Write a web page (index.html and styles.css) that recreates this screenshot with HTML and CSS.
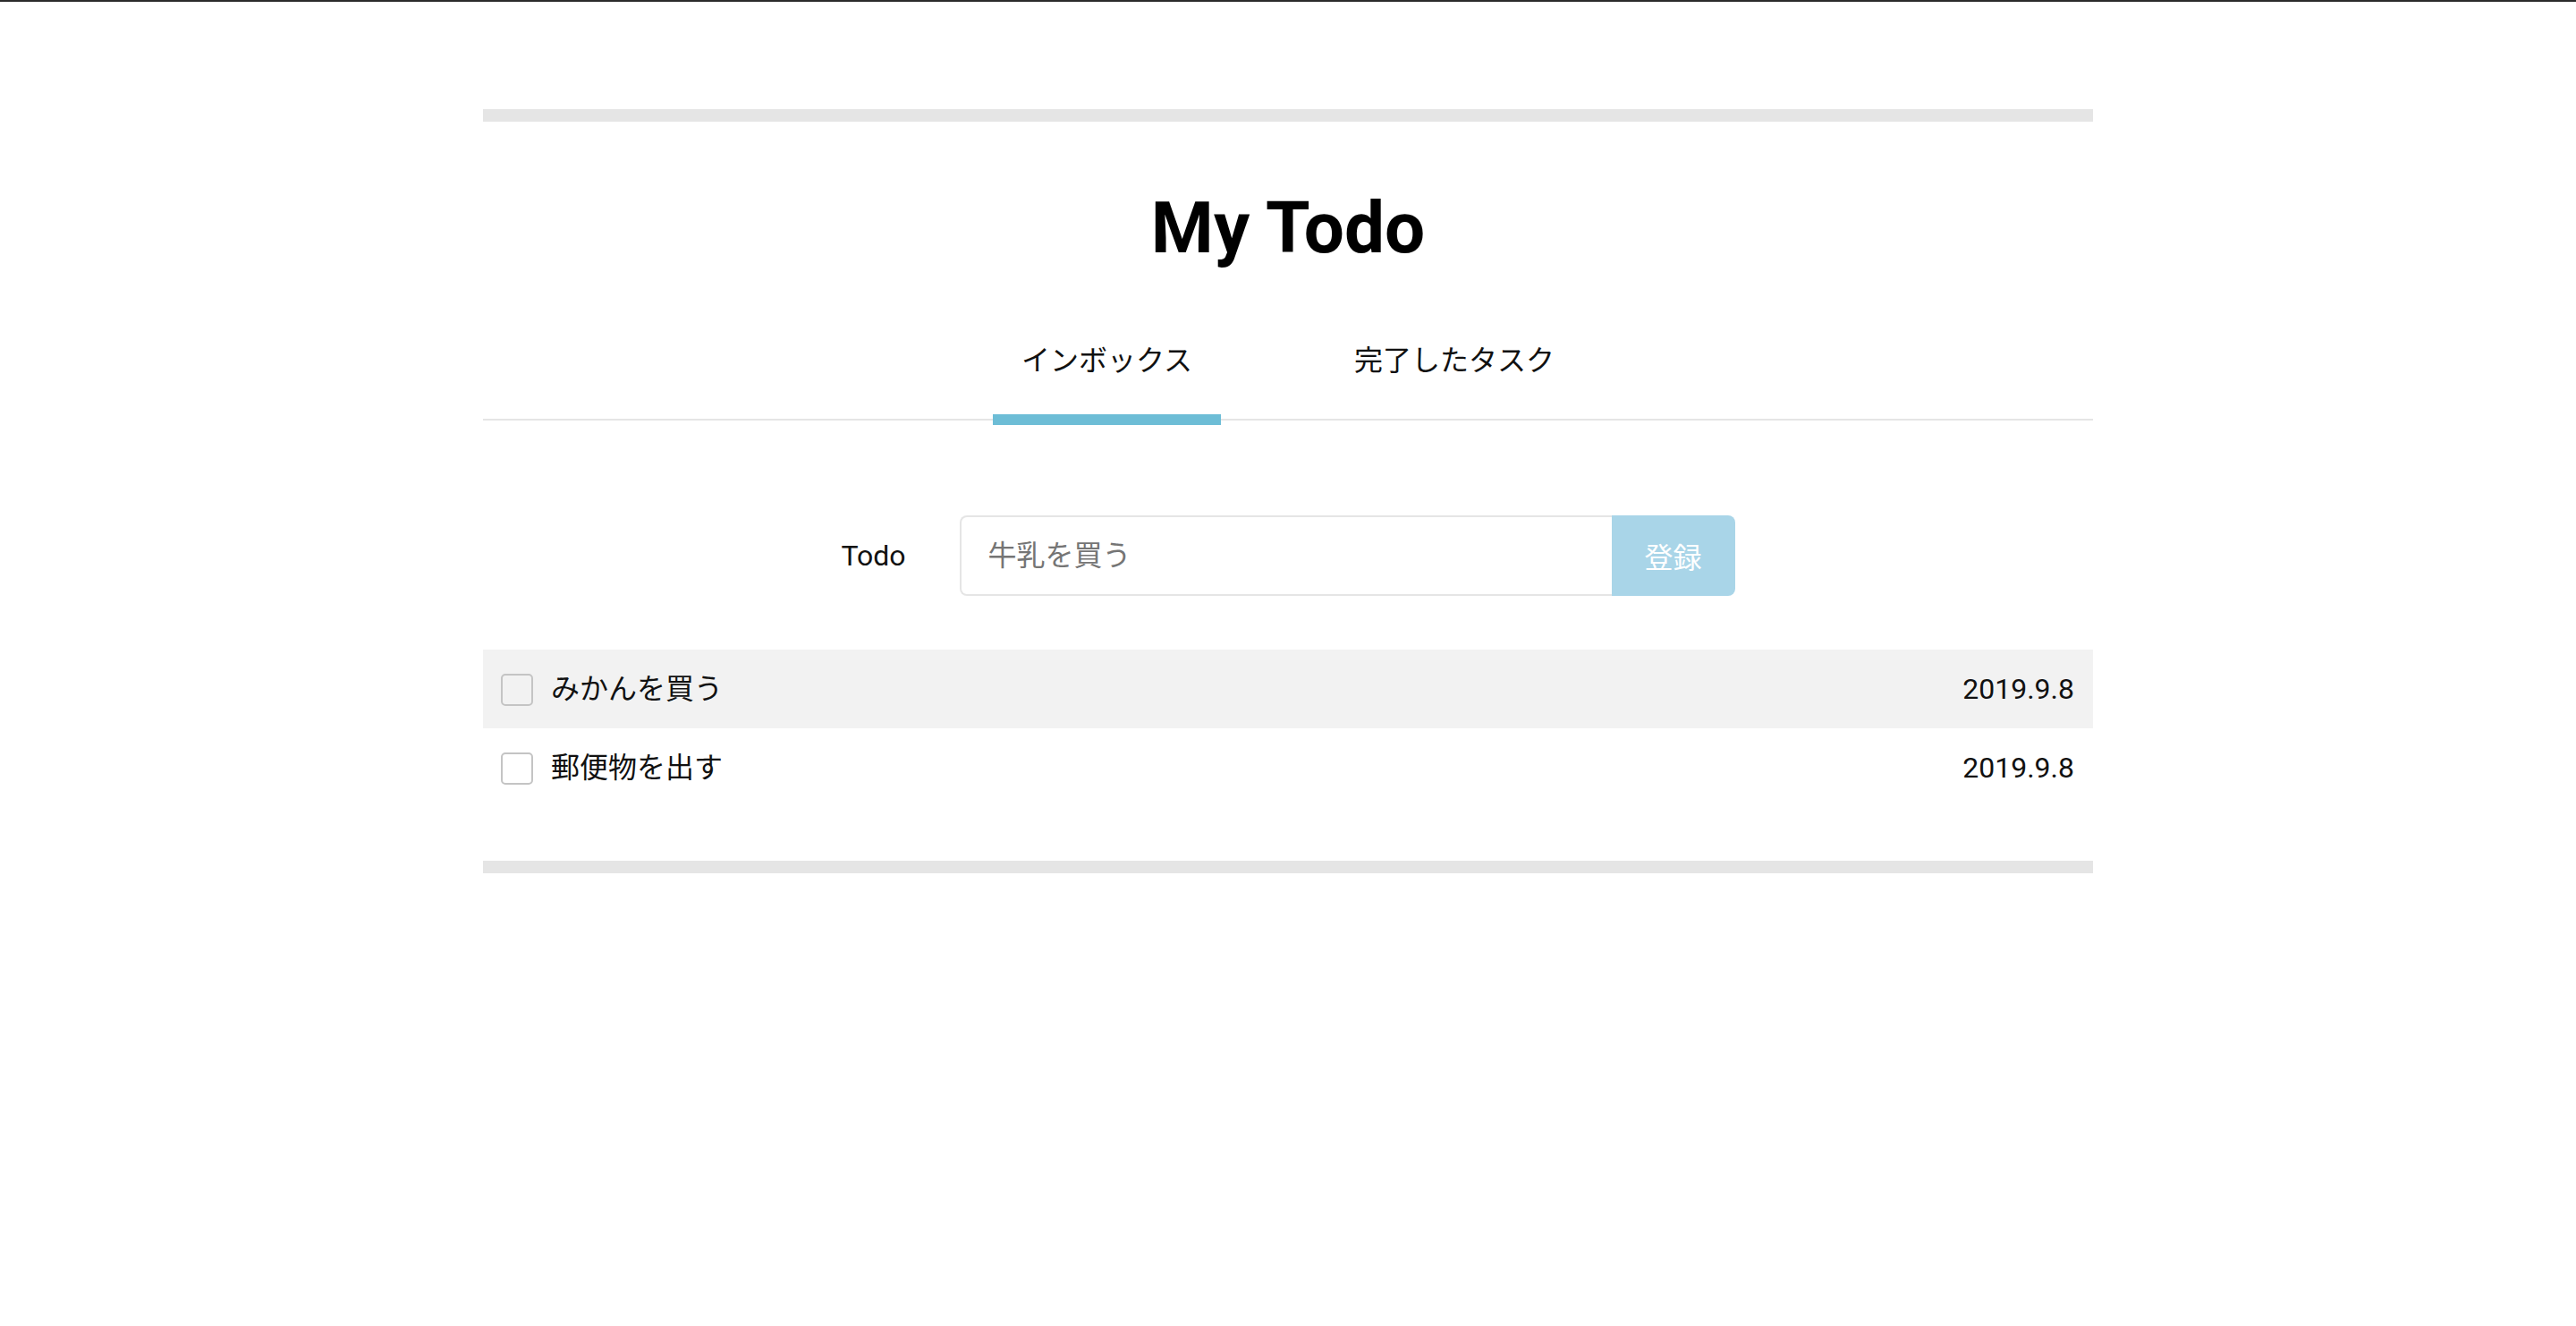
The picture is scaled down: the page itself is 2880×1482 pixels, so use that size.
FILE: index.html
```html
<!DOCTYPE html>
<html lang="ja">
<head>
<meta charset="utf-8">
<title>My Todo</title>
<link rel="stylesheet" href="styles.css">
</head>
<body>
<div class="page">
  <div class="bar"></div>
  <h1 class="title">My Todo</h1>
  <nav class="tabs">
    <a class="tab tab-active">インボックス</a>
    <a class="tab">完了したタスク</a>
  </nav>
  <form class="add-form">
    <label class="add-label" for="todo">Todo</label>
    <div class="add-group">
      <input class="add-input" id="todo" type="text" placeholder="牛乳を買う">
      <button class="add-btn" type="button">登録</button>
    </div>
  </form>
  <ul class="todo-list">
    <li class="todo-item todo-item-shaded">
      <input class="todo-check" type="checkbox">
      <span class="todo-text">みかんを買う</span>
      <span class="todo-date">2019.9.8</span>
    </li>
    <li class="todo-item">
      <input class="todo-check" type="checkbox">
      <span class="todo-text">郵便物を出す</span>
      <span class="todo-date">2019.9.8</span>
    </li>
  </ul>
  <div class="bar bar-bottom"></div>
</div>
</body>
</html>
```
FILE: styles.css
```css
* { box-sizing: border-box; }

html, body {
  margin: 0;
  padding: 0;
  background: #fff;
}

body {
  border-top: 2px solid #2b2b2b;
  font-family: Roboto, "Noto Sans CJK JP", sans-serif;
  color: #111;
  font-size: 32px;
}

.page {
  width: 1800px;
  margin: 0 auto;
  padding-top: 120px;
}

.bar {
  height: 14px;
  background: #e5e5e5;
}

.bar-bottom {
  margin-top: 60px;
}

.title {
  margin: 72px 0 0;
  font-size: 80px;
  line-height: 94px;
  font-weight: 700;
  text-align: center;
  color: #000;
}

.tabs {
  margin-top: 55px;
  display: flex;
  justify-content: center;
  gap: 117px;
  border-bottom: 2px solid #e5e5e5;
}

.tab {
  position: relative;
  padding: 22px 32px 41px;
  line-height: 48px;
  font-size: 32px;
  color: #111;
  text-decoration: none;
  cursor: pointer;
}

.tab-active::after {
  content: "";
  position: absolute;
  left: 0;
  right: 0;
  bottom: -7px;
  height: 12px;
  background: #6dbdd6;
}

.add-form {
  margin: 106px 0 0;
  display: flex;
  justify-content: center;
  align-items: center;
  gap: 60px;
}

.add-label {
  font-size: 32px;
  line-height: 48px;
  color: #111;
}

.add-group {
  display: flex;
  height: 90px;
}

.add-input {
  width: 729px;
  height: 90px;
  margin: 0;
  padding: 0 30px;
  border: 2px solid #e5e5e5;
  border-right: none;
  border-radius: 8px 0 0 8px;
  font-family: Roboto, "Noto Sans CJK JP", sans-serif;
  font-size: 32px;
  color: #111;
  outline: none;
}

.add-input::placeholder {
  color: #757575;
}

.add-btn {
  width: 138px;
  height: 90px;
  margin: 0;
  border: none;
  border-radius: 0 8px 8px 0;
  background: #a9d5e8;
  color: #fff;
  font-family: Roboto, "Noto Sans CJK JP", sans-serif;
  font-size: 32px;
  cursor: pointer;
}

.todo-list {
  list-style: none;
  margin: 60px 0 0;
  padding: 0;
}

.todo-item {
  display: flex;
  align-items: center;
  height: 88px;
  padding: 0 21px 0 20px;
}

.todo-item-shaded {
  background: #f2f2f2;
}

.todo-check {
  appearance: none;
  -webkit-appearance: none;
  width: 36px;
  height: 36px;
  margin: 2px 20px 0 0;
  border: 2px solid #c4c4c4;
  border-radius: 5px;
  background: transparent;
  flex-shrink: 0;
}

.todo-text {
  flex: 1;
  font-size: 32px;
  line-height: 48px;
  color: #111;
}

.todo-date {
  font-size: 32px;
  line-height: 48px;
  color: #111;
}
```
